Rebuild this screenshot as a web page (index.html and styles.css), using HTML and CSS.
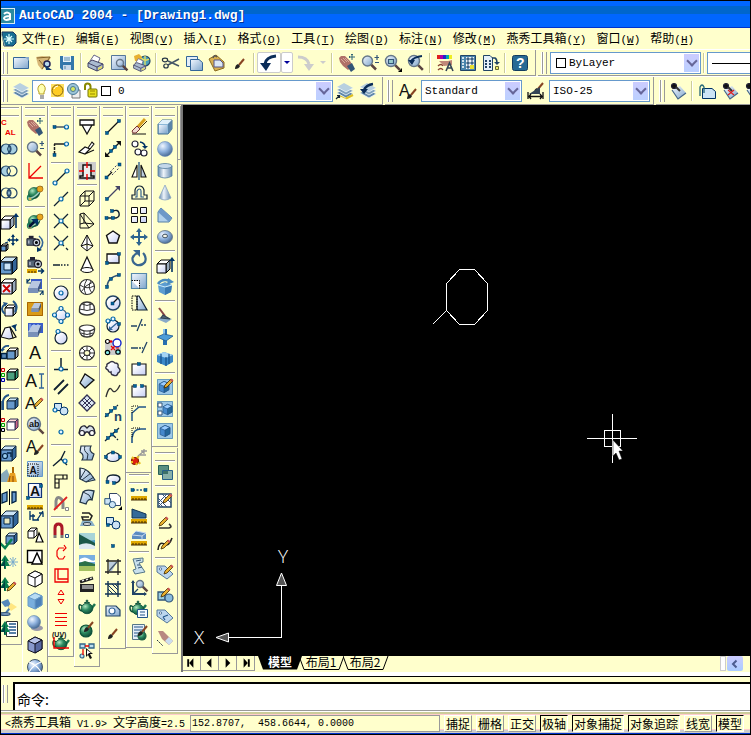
FILE: index.html
```html
<!DOCTYPE html>
<html lang="zh-CN">
<head>
<meta charset="utf-8">
<title>AutoCAD 2004 - [Drawing1.dwg]</title>
<link rel="stylesheet" href="styles.css">
</head>
<body>
<svg class="defs" aria-hidden="true">
  <defs>
    <linearGradient id="sky" x1="0" y1="0" x2="1" y2="1"><stop offset="0" stop-color="#f4f8ff"/><stop offset="1" stop-color="#7fa6cc"/></linearGradient>
    <linearGradient id="pale" x1="0" y1="0" x2="1" y2="1"><stop offset="0.2" stop-color="#ffffff"/><stop offset="1" stop-color="#c4cdf4"/></linearGradient>
    <linearGradient id="steel" x1="0" y1="0" x2="1" y2="0"><stop offset="0" stop-color="#5f86ac"/><stop offset="0.4" stop-color="#eef4fa"/><stop offset="1" stop-color="#5f86ac"/></linearGradient>
    <radialGradient id="ball" cx="0.35" cy="0.3" r="0.75"><stop offset="0" stop-color="#f0f6ff"/><stop offset="0.5" stop-color="#8fb2de"/><stop offset="1" stop-color="#446690"/></radialGradient>
    <radialGradient id="jade" cx="0.35" cy="0.3" r="0.8"><stop offset="0" stop-color="#b0e8c0"/><stop offset="0.45" stop-color="#2c8a60"/><stop offset="1" stop-color="#0a4030"/></radialGradient>
  </defs>
</svg>
<div class="window">
  <header class="titlebar">
    <svg class="app-icon" viewBox="0 0 14 16" aria-hidden="true"><rect width="14" height="16" fill="#d8ecf4"/><path d="M0 1H13V15H0Z" fill="#2c8aa0"/><path d="M3 6Q6 3 9 6V12M9 8Q3 8 3 10.500Q4 13 9 11" fill="none" stroke="#fff" stroke-width="2"/></svg>
    <h1>AutoCAD 2004 - [Drawing1.dwg]</h1>
  </header>
  <nav class="menubar">
    <svg class="doc-icon" viewBox="0 0 16 16" aria-hidden="true"><path d="M1 1H12L15 4V12L12 15H3Z" fill="#176f92" stroke="#1c3860"/><path d="M0 2L4 15" stroke="#8aa"/><path d="M8 3V13M3 8H13M5 5L11 11M11 5L5 11" stroke="#dff" stroke-width="1.200"/></svg>
    <a href="#">文件<span>(<u>F</u>)</span></a>
    <a href="#">编辑<span>(<u>E</u>)</span></a>
    <a href="#">视图<span>(<u>V</u>)</span></a>
    <a href="#">插入<span>(<u>I</u>)</span></a>
    <a href="#">格式<span>(<u>O</u>)</span></a>
    <a href="#">工具<span>(<u>T</u>)</span></a>
    <a href="#">绘图<span>(<u>D</u>)</span></a>
    <a href="#">标注<span>(<u>N</u>)</span></a>
    <a href="#">修改<span>(<u>M</u>)</span></a>
    <a href="#">燕秀工具箱<span>(<u>Y</u>)</span></a>
    <a href="#">窗口<span>(<u>W</u>)</span></a>
    <a href="#">帮助<span>(<u>H</u>)</span></a>
  </nav>
  <div class="toolrow">
    <div class="toolbar standard">
      <i class="grip"></i>
      <div class="tools" data-tools="new open save - print preview publish - cut copy paste brush -"></div>
      <div class="split"><button type="button" class="raised" data-icon="undo" aria-label="undo"></button><button type="button" class="raised drop" aria-label="undo list"></button></div>
      <div class="split off"><button type="button" data-icon="redo" aria-label="redo"></button><button type="button" class="drop" aria-label="redo list"></button></div>
      <div class="tools" data-tools="- pan zoom zoomwindow zoomprevious - properties designcenter palettes - help"></div>
    </div>
    <div class="toolbar open">
      <i class="grip"></i>
      <label class="combo color"><i class="swatch"></i><select aria-label="颜色"><option>ByLayer</option></select><i class="arrow"></i></label>
      <i class="sep"></i>
      <label class="combo linetype"><svg viewBox="0 0 80 10" aria-hidden="true"><path d="M0 5.500H80" stroke="#000"/></svg><select aria-label="线型"><option></option></select></label>
    </div>
  </div>
  <div class="toolrow second">
    <div class="toolbar">
      <i class="grip"></i>
      <div class="tools" data-tools="layers"></div>
      <label class="combo layer"><span class="layer-state"><svg viewBox="0 0 80 20" aria-hidden="true">
        <path d="M8 3A5 5 0 0 0 5 11V13H10V11A5 5 0 0 0 8 3Z" fill="#ffffb0" stroke="#b8a020"/><path d="M6 15H10M6 17H10" stroke="#555"/>
        <rect x="17" y="3" width="13" height="13" fill="#ffe060"/><circle cx="23.500" cy="9.500" r="5.500" fill="#ffcc22" stroke="#806010"/><path d="M20 8Q21 5 24 5" stroke="#fff" fill="none"/>
        <path d="M40 9H46V17H38V14" fill="#eee" stroke="#777"/><circle cx="39" cy="8" r="5.500" fill="#9cc4d8" stroke="#4a7a98"/><circle cx="39" cy="8" r="2.500" fill="#d8e860" stroke="#4a7a98"/>
        <path d="M51 9V5Q51 2.500 53.500 2.500T56.500 5V9" fill="none" stroke="#888800" stroke-width="2"/><rect x="54" y="8" width="9" height="8" rx="1" fill="#e8e020" stroke="#777700"/><path d="M56 10H61M56 13H61" stroke="#998800"/>
        <rect x="67.500" y="5.500" width="9" height="9" fill="#fff" stroke="#000"/></svg></span><select aria-label="图层"><option>0</option></select><i class="arrow"></i></label>
      <div class="tools" data-tools="layerset layerprev"></div>
    </div>
    <div class="toolbar styles">
      <i class="grip"></i>
      <div class="tools" data-tools="textbrush"></div>
      <label class="combo style"><select aria-label="文字样式"><option>Standard</option></select><i class="arrow"></i></label>
      <div class="tools" data-tools="dimstyle"></div>
      <label class="combo style"><select aria-label="标注样式"><option>ISO-25</option></select><i class="arrow"></i></label>
    </div>
    <div class="toolbar open">
      <i class="grip"></i>
      <div class="tools" data-tools="refedit - xref refadd refremove"></div>
    </div>
  </div>
  <main class="workspace">
    <div class="dock">
      <div class="col"><div class="palette" data-tools="cal union subtract intersect - extrude moveface offsetface deleteface rotateface taperface copyface colorface - copyedge coloredge - imprint clean separate shell check landscape landedit lamp landlist"></div></div>
      <div class="col"><div class="palette" data-tools="pan zoom redaxis planet - planetgo camera cameradist swap slabgold slabblue lettera - texta textpencil textfind textbrush textfit textbox rulers shapes1 shapes2 whitecube bluebox bluesphere slatecube spherewire"></div></div>
      <div class="col"><div class="palette" data-tools="track snapfrom - snapend snapmid snapint snapapp snapext - snapcenter snapquad snaptan - snapperp snapparallel snapinsert snapnode - snapnear snapcorner snapnone - magnet redloop redframe redarrows redlines uvteapot"></div></div>
      <div class="col"><div class="palette" data-tools="solid2d face3d edge=on - boxmesh wedgemesh pyramid conemesh spheremesh dome dish torusmesh - patch mesh - revsurf tabsurf rulesurf edgesurf scene fog background movie teapot teapotbrush pick"></div></div>
      <div class="col"><div class="palette" data-tools="line xline mline ray pline polygon rectangle arc circle circle3 cloud0 revcloud spline multiline0 breakline ellipse ellipsearc insertblock makeblock point region hatch boundary brush"></div></div>
      <div class="col">
        <div class="palette" data-tools="erase copyobj mirror offset array move rotate scale stretch trim extend break1 break2 chamfer fillet explode"></div>
        <div class="palette" data-tools="distance area massprop - list locate teapotlist listbrush"></div>
      </div>
      <div class="col">
        <div class="palette" data-tools="box sphere cylinder cone wedge torus - extrude revolve - slice section interfere - setupdraw setupview setupprofile"></div>
        <div class="palette spaced" data-tools="draworder - hatchedit pledit spedit - attedit blockedit tagedit mledit"></div>
      </div>
      <div class="col stub"></div>
    </div>
    <section class="document">
      <div class="canvas">
        <svg class="drawing" viewBox="183 106 567 549" fill="none" stroke="#fff" shape-rendering="crispEdges" role="img" aria-label="Drawing">
          <path d="M432.500 324.500L446.500 310.500L459.500 324.500H474.500L487.500 310.500V283.500L474.500 269.500H459.500L446.500 283.500V310.500"/>
          <path d="M587 438.500H637M612.500 414V463M604.500 430.500H620.500V446.500H604.500Z"/>
          <path d="M613 440V456L616 453L619 460L622 459L619 451H623Z" fill="#fff" stroke="#000" shape-rendering="auto" stroke-width="0.500"/>
        </svg>
        <svg class="ucs" viewBox="183 535 120 120" fill="none" stroke="#fff" aria-label="UCS">
          <path d="M229 636.500H281.500V585" shape-rendering="crispEdges"/>
          <path d="M281.500 572L276.500 584.500H286.500ZM216 636.500L228.500 632V641Z" fill="#555"/>
          <text x="194" y="643">X</text><text x="278" y="562">Y</text>
        </svg>
      </div>
      <div class="sheetbar">
        <button type="button" aria-label="第一个"><svg viewBox="0 0 18 14"><path d="M5.500 3V11" stroke="#000" stroke-width="2"/><path d="M11 2V12L6.500 7Z"/></svg></button>
        <button type="button" aria-label="上一个"><svg viewBox="0 0 18 14"><path d="M11 2V12L6 7Z"/></svg></button>
        <button type="button" aria-label="下一个"><svg viewBox="0 0 18 14"><path d="M7 2V12L12 7Z"/></svg></button>
        <button type="button" aria-label="最后一个"><svg viewBox="0 0 18 14"><path d="M12.500 3V11" stroke="#000" stroke-width="2"/><path d="M7 2V12L11.500 7Z"/></svg></button>
        <div class="tabs">
          <button type="button" class="tab active"><svg viewBox="0 0 46 14" aria-hidden="true"><path d="M0 0L5 13.500H39L44 0Z" fill="#000"/></svg><span>模型</span></button>
          <button type="button" class="tab"><svg viewBox="0 0 46 14" aria-hidden="true"><path d="M0 0L5 13.500H40L45 0" fill="#ffffcc" stroke="#000"/></svg><span>布局1</span></button>
          <button type="button" class="tab"><svg viewBox="0 0 46 14" aria-hidden="true"><path d="M0 0L5 13.500H40L45 0" fill="#ffffcc" stroke="#000"/></svg><span>布局2</span></button>
        </div>
        <i class="splitter"></i>
        <button type="button" class="scroll" aria-label="向左滚动"><svg viewBox="0 0 16 14"><path d="M9.500 3.500L6 7L9.500 10.500" fill="none" stroke="#4c5c90" stroke-width="2"/></svg></button>
      </div>
    </section>
  </main>
  <section class="command">
    <i class="grip"></i>
    <div class="prompt"><label for="cmd">命令:</label><input id="cmd" type="text"></div>
  </section>
  <footer class="status">
    <p><span>&lt;</span>燕秀工具箱<span> V1.9&gt; </span>文字高度<span>=2.5</span></p>
    <output>152.8707,&nbsp; 458.6644, 0.0000</output>
    <button type="button">捕捉</button>
    <button type="button">栅格</button>
    <button type="button">正交</button>
    <button type="button" class="down">极轴</button>
    <button type="button" class="down">对象捕捉</button>
    <button type="button" class="down">对象追踪</button>
    <button type="button">线宽</button>
    <button type="button" class="down">模型</button>
  </footer>
</div>
<script src="icons.js"></script>
</body>
</html>
```

FILE: styles.css
```css
* { box-sizing: border-box; }
:root {
  --face: #ffffcc;
  --edge: #999999;
  --cjk: "Noto Sans CJK SC", sans-serif;
  --mono: "Liberation Mono", monospace;
}
html, body { height: 100%; margin: 0; }
body { background: #000; font: 12px/16px var(--cjk); color: #000; overflow: hidden; }
button, select, input { font: inherit; color: inherit; margin: 0; padding: 0; border: 0; background: none; border-radius: 0; }
a { color: inherit; text-decoration: none; }
svg { display: block; flex: none; }
.defs { position: absolute; width: 0; height: 0; }

.window { height: 100vh; display: flex; flex-direction: column; background: var(--face); border: 1px solid #000; overflow: hidden; }

.titlebar { height: 27px; flex: none; display: flex; align-items: center; gap: 4px; padding-top: 3px; background: linear-gradient(#0066ff 5px, #0066cc 5px, #0066cc 13px, #0066ff 13px, #0066ff 26px, #0033cc 26px); }
.app-icon { width: 14px; height: 16px; }
.titlebar h1 { margin: 0; font: bold 13px/20px var(--mono); color: #fff; text-shadow: 1px 1px #003399; white-space: pre; }

.menubar { height: 21px; flex: none; display: flex; align-items: center; gap: 10px; white-space: nowrap; }
.doc-icon { width: 16px; height: 16px; margin-right: -5px; }
.menubar span { font: 11px/16px var(--mono); }

.toolrow { height: 27px; flex: none; display: flex; border-top: 1px solid #fff; overflow: hidden; }
.toolrow.second { height: 29px; }
.toolbar { display: flex; align-items: center; flex: none; padding: 0 3px 0 2px; border-right: 1px solid var(--edge); border-bottom: 1px solid var(--edge); margin-right: 2px; }
.toolbar.standard { padding-right: 4px; }
.toolbar.styles { gap: 2px; padding: 0 3px; }
.toolbar.open { flex: 1 0 auto; border-right: 0; margin-right: 0; padding-left: 4px; }
.grip { flex: none; width: 5px; height: 22px; border: solid var(--edge); border-width: 0 1px; box-shadow: inset 1px 0 #fff, -1px 0 #fff; }
.toolbar .grip { margin-right: 1px; }
.tools { display: flex; align-items: center; }
.tools button { width: 23px; height: 22px; display: flex; align-items: center; justify-content: center; }
.tools svg, .palette svg, .split svg { width: 20px; height: 20px; }
.sep { flex: none; width: 2px; margin: 0 2px; height: 20px; background: linear-gradient(90deg, #cccc99 1px, #fff 1px); }
.split { display: flex; height: 21px; }
.split button { width: 24px; display: flex; align-items: center; justify-content: center; }
.split .drop { width: 12px; }
.split .drop::before { content: ""; border: 3px solid transparent; border-top-color: #000099; border-bottom: 0; }
.split.off .drop::before { border-top-color: #cccccc; }
.split .raised { background: #fff; border: 1px solid #cccccc; border-radius: 2px; }

.combo { display: flex; align-items: center; flex: none; height: 22px; background: #fff; border: 1px solid #6699cc; overflow: hidden; }
.combo select { appearance: none; flex: 1; min-width: 0; font: 11px/16px var(--mono); }
.combo.color { width: 151px; margin-left: 2px; }
.combo.color .swatch { width: 10px; height: 10px; border: 1px solid #000; margin: 0 3px 0 5px; }
.combo.linetype { flex: 1; border-right: 0; padding-left: 4px; }
.combo.linetype svg { width: 80px; height: 10px; }
.combo.linetype select { flex: 0 0 0; width: 0; }
.combo.layer { width: 301px; }
.layer-state svg { width: 80px; height: 20px; }
.layer-state { margin: 0 4px 0 1px; }
.combo.style { width: 101px; padding-left: 3px; }
.arrow { flex: none; width: 15px; height: 18px; margin-right: 1px; background: linear-gradient(#ccccff, #bbd0ff); display: flex; align-items: center; justify-content: center; }
.arrow::before { content: ""; width: 6px; height: 6px; margin-bottom: 3px; border: solid #666699; border-width: 0 2px 2px 0; transform: rotate(45deg); }

.workspace { flex: 1; min-height: 0; display: flex; }
.dock { flex: none; display: flex; align-items: flex-start; margin-left: -5px; overflow: hidden; height: 100%; padding-top: 1px; }
.col { width: 26px; flex: none; }
.palette { border: solid var(--edge); border-width: 0 1px 1px 0; padding: 10px 0 4px; box-shadow: inset 1px 0 #fff; display: flex; flex-direction: column; align-items: center; position: relative; }
.palette::before { content: ""; position: absolute; left: 3px; right: 2px; top: 1px; height: 7px; border: solid var(--edge); border-width: 1px 0; box-shadow: 0 1px #fff, inset 0 1px #fff; }
.palette.spaced { margin-top: 1px; padding-top: 13px; }
.palette.spaced::before { top: 4px; }
.palette button { width: 22px; height: 22px; display: flex; align-items: center; justify-content: center; }
.palette button.on { background: #cccccc; background-clip: content-box; padding: 2px; }
.palette .sep { width: 20px; height: 2px; margin: 2px 0; background: linear-gradient(var(--edge) 1px, #fff 1px); }
.col.stub { width: 3px; height: 54px; border: solid var(--edge); border-width: 0 1px 1px 0; }

.document { flex: 1; min-width: 0; display: flex; flex-direction: column; border-left: 2px solid #777; }
.canvas { flex: 1; min-height: 0; position: relative; background: #000; overflow: hidden; border-top: 1px solid #000; }
.drawing { position: absolute; left: 0; top: 0; width: 567px; height: 549px; }
.ucs { position: absolute; left: 0; bottom: 0; width: 120px; height: 120px; }
.ucs text { font: 300 19px "Open Sans", sans-serif; fill: #fff; stroke: none; }
.sheetbar { height: 15px; flex: none; display: flex; margin-bottom: 1px; }
.sheetbar > button { width: 18px; border: solid var(--edge); border-width: 0 1px 1px 0; overflow: hidden; }
.sheetbar svg { width: 100%; height: 14px; }
.tabs { display: flex; margin-left: 3px; }
.tab { position: relative; width: 46px; height: 14px; margin-right: -2px; text-align: center; line-height: 12px; }
.tab svg { position: absolute; inset: 0; }
.tab span { position: relative; display: block; height: 14px; padding-right: 2px; white-space: nowrap; }
.tab.active { z-index: 1; color: #fff; font-weight: bold; margin-right: -5px; }
.splitter { width: 6px; margin-left: auto; border: 1px solid #cccccc; background: #fff; }
.sheetbar > .scroll { width: 16px; margin: 0 7px 0 1px; border: 0; border-radius: 2px; background: linear-gradient(#ccccff, #aaccff); }

.command { flex: none; height: 38px; display: flex; border-top: 4px solid #fff; padding-left: 2px; gap: 5px; background: linear-gradient(#000 1px, transparent 1px); }
.command .grip { height: 18px; margin-top: 9px; }
.prompt { flex: 1; display: flex; align-items: flex-end; gap: 4px; margin-top: 6px; padding: 0 2px 2px; background: #fff; border: solid #000; border-width: 2px 0 0 2px; font-size: 14px; line-height: 18px; }
.prompt input { flex: 1; min-width: 0; outline: 0; }

.status { flex: none; height: 24px; display: flex; align-items: center; gap: 4px; padding: 2px 6px 0 4px; white-space: nowrap; overflow: hidden; background: linear-gradient(#999 1px, #fff 1px, #fff 2px, #cccc99 2px, #cccc99 4px, #ffcccc 4px, #ffcccc 5px, var(--face) 5px, var(--face) 19px, #ffcccc 19px, #ffcccc 20px, #cccccc 20px, #cccccc 23px, #0033cc 23px); }
.status p { margin: 0; flex: none; width: 181px; }
.status span, .status output { font: 10px/14px var(--mono); white-space: pre; }
.status output { flex: 1; min-width: 0; height: 17px; padding: 1px; border: 1px solid var(--edge); background: var(--face); }
.status button { flex: none; height: 17px; line-height: 15px; padding: 0 1px; background: var(--face); border: 1px solid; border-color: #fff var(--edge) var(--edge) #fff; }
.status button.down { border-color: #000 #fff #fff #000; }
```

FILE: icons.js
```javascript
// Shape helpers; every icon is drawn on a 20 x 20 grid.
const p = (d, s = '#000', f = 'none', w = 1.3) => `<path d="${d}" stroke="${s}" fill="${f}" stroke-width="${w}"/>`;
const f = (d, c) => `<path d="${d}" fill="${c}"/>`;
const c = (x, y, r, fill = 'none', s = '#000', w = 1.2) => `<circle cx="${x}" cy="${y}" r="${r}" fill="${fill}" stroke="${s}" stroke-width="${w}"/>`;
const e = (x, y, rx, ry, fill = 'none', s = '#000', w = 1.2) => `<ellipse cx="${x}" cy="${y}" rx="${rx}" ry="${ry}" fill="${fill}" stroke="${s}" stroke-width="${w}"/>`;
const t = (x, y, s, size, col = '#111', w = 400) => `<text x="${x}" y="${y}" font-family="Liberation Sans" font-size="${size}" font-weight="${w}" fill="${col}">${s}</text>`;
const sq = (...a) => { let s = ''; for (let i = 0; i < a.length; i += 2) s += `<rect x="${a[i] - 1.5}" y="${a[i + 1] - 1.5}" width="3" height="3" fill="#006699" stroke="#003366" stroke-width="0.5"/>`; return s; };
const ring = (...a) => { let s = ''; for (let i = 0; i < a.length; i += 2) s += c(a[i], a[i + 1], 2, '#e8f6ff', '#0066aa', 1.2); return s; };
const cube = (x, y, n, front = 'url(#pale)', top = '#fff', side = '#9ab', s = '#000') => {
  const d = Math.round(n * 0.4);
  return p(`M${x} ${y + d}l${d} ${-d}h${n}l${-d} ${d}Z`, s, top, 1) + p(`M${x + n} ${y + d}l${d} ${-d}v${n}l${-d} ${d}Z`, s, side, 1) + p(`M${x} ${y + d}h${n}v${n}h${-n}Z`, s, front, 1);
};
const blueCube = (x, y, n) => cube(x, y, n, '#6699cc', '#cce4f6', '#33669a', '#102840');
const iso = (a, b, d, s) => p('M10 2L17 5V14L10 18L3 15V6Z', s, b, 1) + p('M3 6L10 2L17 5L10 9Z', s, a, 1) + p('M10 9L17 5V14L10 18Z', s, d, 1);
const pencil = (x, y) => f(`M${x} ${y}l1-3 6-6 2 2-6 6Z`, '#e8b030') + p(`M${x} ${y}l1-3 6-6 2 2-6 6Z`, '#402800', 'none', 0.8) + f(`M${x + 6} ${y - 8}l1.500-1.500 2 2-1.500 1.500Z`, '#cc5555');
const brush = (x, y) => p(`M${x + 4} ${y - 4}L${x + 9} ${y - 10}`, '#884422', 'none', 2) + f(`M${x} ${y}Q${x} ${y - 4} ${x + 3} ${y - 5}L${x + 5} ${y - 3}Q${x + 4} ${y} ${x} ${y}Z`, '#222');
const lens = (x, y, r) => p(`M${x + r * 0.7} ${y + r * 0.7}L${x + r * 0.7 + 5} ${y + r * 0.7 + 5}`, '#5a4440', 'none', 2.5) + c(x, y, r, 'url(#sky)', '#667788', 1.4);
const ruler = y => f(`M2 ${y}H18V${y + 4}H2Z`, '#e0a800') + p(`M4 ${y + 4}V${y + 2}M7 ${y + 4}V${y + 2}M10 ${y + 4}V${y + 2}M13 ${y + 4}V${y + 2}M16 ${y + 4}V${y + 2}M2 ${y + 4}H18`, '#402800', 'none', 1);
const tree = f('M6 2L10 8H8L11 13H7V16H5V13H1L4 8H2Z', '#0a8050') + f('M6 4V15H5V13H2L5 8Z', '#044');
const teapot = (dy = 0) => `<g transform="translate(0 ${dy})">` + p('M5 9Q2 6 2 10T6 14', '#0a5038', 'none', 1.5) + p('M14 12L18 7', '#1c7450', 'none', 2.5) + e(10, 11.5, 5.8, 5.2, 'url(#jade)', '#0a5038', 0.8) + p('M7 6Q10 4 13 6', '#0a5038', '#60b080', 1) + c(10, 4, 1, '#287050', '#0a5038', 0.8) + '</g>';
const tag = f('M2 4L10 4L18 12L12 17L2 10Z', '#bcd6ee') + p('M2 4L10 4L18 12L12 17L2 10Z', '#557799', 'none', 1) + c(5.5, 7, 1.2, '#fff', '#557799', 1);
const globe = f('M2 13Q8 4 16 3Q19 3 17 7Q12 16 5 18Q1 18 2 13Z', '#208060') + c(9, 10, 5.5, 'url(#jade)', '#0a5038', 0.7) + p('M3 15Q9 16 15 8', '#a0d0c0', 'none', 1.3) + c(15, 6, 3, '#e8a820', '#a06010', 0.7) + c(5, 16, 1.5, '#d8d040', '#888', 0.5);
const hand = f('M2 5L4 3L8 3L13 8L16 13L11 17L6 13L3 9Z', '#b07068') + p('M4 6L8 10M6 5L10 9M8 5L12 9', '#d8a898', 'none', 1) + f('M10 13L15 10L18 16L14 19Z', '#335577') + p('M15 1V7M12 4H18M14 2L15 1L16 2M13 3L12 4L13 5', '#336677', 'none', 1);
const sheets = f('M2 12L9 9L18 13L11 17Z', '#5f86a8') + f('M2 9L9 6L18 10L11 14Z', '#7fa0bc') + f('M2 6L9 2L18 7L11 11Z', '#b8d0e0') + p('M2 6L11 11L18 7M2 9L11 14L18 10M2 12L11 17L18 13', '#eef6fc', 'none', 0.8);
const page = p('M2.500 4.500H17.500V15.500H2.500Z', '#336699', 'url(#sky)', 1) + f('M14 4H18V8Z', '#88aacc');
const printer = f('M4 8L8 2L14 5L12 10Z', '#fff') + p('M4 8L8 2L14 5L12 10', '#668', 'none', 1) + p('M2 10L6 7L17 11V15L11 18L2 14Z', '#446', '#aabbd0', 1) + p('M2 10L11 14L17 11M11 14V18', '#446', 'none', 1) + f('M12 15L16 13V15L12 17Z', '#e8e060');
const cam = p('M2 7H11V14H2Z', '#223', '#556677', 1) + c(12, 11, 3.5, '#c8d4e0', '#223', 1.3) + c(12, 11, 1, '#223') + f('M4 4H9V7H4Z', '#223') + p('M4 9V12', '#ccd', 'none', 1.2);
const slab = f('M3 11L7 4H16L13 11Z', '#b8c8e0') + f('M3 11H13V16H3Z', '#7890b8') + f('M13 11L16 4V9L13 16Z', '#405880');
const refpin = f('M4 9L12 5L18 12L10 18Z', 'url(#sky)') + p('M4 9L10 18L18 12', '#446688', 'none', 1.2) + c(6, 5, 2.5, '#223', '#223') + c(6, 5, 1, '#cc8') + p('M8 6L12 10', '#333', 'none', 2);
const blocks = p('M3.500 4.500H10.500V11.500H3.500Z', '#036', '#cce4f6', 1) + c(13, 12, 4, '#cce4f6', '#036', 1);
const board = f('M2 2H18V18H2Z', '#9cc8e8') + p('M2.500 2.500H17.500V17.500H2.500Z', '#6699bb', 'none', 1);

const icons = {
  // Standard, layer, style and reference bars
  new: page,
  open: f('M2 4L8 3L17 4L15 8L8 17L4 12Z', '#d8b878') + p('M3 5L16 4L8 16M5 7L10 13', '#80602a', 'none', 1) + c(13, 11, 3, '#b8d8ec', '#225', 1.5) + f('M11 12L18 17H12Z', '#113c70'),
  save: f('M3 3H17V17H5L3 15Z', '#3377aa') + f('M6 3H14V9H6Z', '#e8f2fa') + f('M6 12H14V17H6Z', '#c8d8e8') + p('M7 5H13M7 7H13M8 13V16', '#5588aa', 'none', 1),
  print: printer,
  preview: p('M2.500 2.500H16.500V16.500H2.500Z', '#557799', 'url(#sky)', 1) + `<g transform="translate(4 3)">${lens(7, 7, 3.5)}</g>`,
  publish: c(13, 8, 5, '#4ca0b8', '#246') + p('M9 5Q13 9 17 6M13 3V13', '#e8e060') + f('M2 3L7 1L10 4L8 8L3 8Z', '#e8b030') + `<g transform="translate(0 4) scale(.8)">${printer}</g>`,
  cut: p('M18 6L7 12M18 13L7 8', '#456', 'none', 1.5) + e(4, 7, 2.6, 1.8, 'none', '#234') + e(5, 13, 2.2, 2, 'none', '#234'),
  copy: p('M2.500 3.500H13.500V13.500H2.500Z', '#369', '#e4eef8', 1) + p('M6.500 6.500H15L18.500 9.500V17.500H6.500Z', '#369', 'url(#sky)', 1),
  paste: p('M2 6L9 2L17 9V15L8 18Z', '#8a6a20', '#d8b050', 1) + p('M7 7H13L16 10V14H7Z', '#558', '#dce8f4', 1) + p('M6 5Q7 1 10 4', '#555', 'none', 1.5),
  brush: brush(5, 16),
  undo: p('M6 11Q7 4 17 3', '#0a2c58', 'none', 3) + f('M1 10H12L7 18Z', '#0a2c58'),
  redo: p('M3 4Q12 4 14 11', '#cccccc', 'none', 3) + f('M9 11H19L14 18Z', '#cccccc'),
  pan: hand,
  zoom: lens(7.5, 8, 5) + p('M17 2V7M14.500 4.500H19M15 9.500H19', '#357', 'none', 1.2),
  zoomwindow: lens(8, 8, 5.5) + p('M5.500 6.500H10.500V10.500H5.500Z', '#357', '#9cc', 1.2) + f('M19 15V19H15Z', '#000'),
  zoomprevious: lens(8, 8, 5.5) + p('M5 8Q8 4 16 3', '#0a2c58', 'none', 2) + f('M2 7H9L6 12Z', '#0a2c58'),
  properties: f('M2 2H5V6H2Z', '#e02020') + f('M5 2H8V6H5Z', '#a0a') + f('M8 2H11V6H8Z', '#22c') + f('M11 2H14V6H11Z', '#0aa') + f('M14 2H17V6H14Z', '#ee2') + f('M4 8H13L17 7V12L9 13Z', '#c08878') + p('M3 13Q6 10 8 13M3 17Q6 14 8 17', '#843') + p('M11 18L14.500 10L18 18M12 15H17', '#345', 'none', 1.6),
  designcenter: p('M2.500 2.500H17.500V17.500H2.500Z', '#246', '#4884ac', 1) + f('M8 4H16V16H8Z', '#eef4fc') + p('M9 5H11V7H9ZM13 5H15V7H13ZM9 9H11V11H9ZM13 9H15V11H13ZM9 13H11V15H9Z', '#246', '#8bd', 1) + p('M4 5H6M4 8H6M4 11H6M4 14H6', '#fff') + f('M12 12H16V16H12Z', '#e8e030'),
  palettes: p('M2.500 2.500H9L11.500 5V17.500H2.500Z', '#246', '#e4f0fa', 1) + p('M4 8H6M8 8H10M4 11H6M8 11H10M4 14H6M8 14H10', '#246', 'none', 2) + p('M11 5H14Q16 6 16 10', '#246', 'none', 1.5) + f('M13 9H19L16 12Z', '#246') + p('M14.500 13.500H17.500V16.500H14.500Z', '#663', '#ee6', 1),
  help: `<rect x="2.500" y="2.500" width="15" height="15" rx="2" fill="#266a94" stroke="#123c60"/>` + t(6, 15, '?', 14, '#fff', 700),
  layers: sheets,
  layerset: f('M4 15L11 12L18 14L11 18Z', '#e0c020') + sheets + p('M11 17.500L18 14', '#e0c020', 'none', 2) + p('M1 18L4 15M2 14.500H4.500V17', '#123', 'none', 1.2),
  layerprev: sheets + p('M6 9Q8 4 15 3', '#0a2c58', 'none', 2.5) + f('M2 8H10L6 13Z', '#0a2c58'),
  textbrush: t(1, 15, 'A', 16, '#111') + brush(9, 18),
  dimstyle: brush(8, 12) + f('M3 13L14 6V13Z', '#345') + p('M2 11V18M17 11V18M3 15.500H16M5 13L3 15.500L5 18M14 13L16 15.500L14 18', '#111', 'none', 1.3),
  refedit: refpin,
  xref: p('M5.500 7.500H15L18.500 10.500V17.500H5.500Z', '#036', '#cce4f6', 1) + p('M3 15V6Q5 2 7 6V12', '#267', 'none', 1.3),
  refadd: refpin + p('M8 9L14 14M14 9L8 14', '#d22'),
  refremove: refpin + f('M10 10L14 8L16 12L12 14Z', '#e8d030'),

  // Solids editing, rendering
  cal: t(2, 8, 'C', 8, '#ee0000', 700) + t(6, 18, 'AL', 8, '#ee0000', 700),
  union: c(13, 10, 5, '#a8d0e0', '#246') + c(7, 10, 5, '#a8d0e0', '#246') + p('M10 6Q7 10 10 14Q13 10 10 6', '#246', '#7ab', 1),
  subtract: c(7, 10, 5, '#a8d0e0', '#246') + c(13, 10, 5, '#ffffcc', '#246') + p('M10 6Q13 10 10 14', '#246', 'none', 1),
  intersect: c(7, 10, 5, 'none', '#246') + c(13, 10, 5, 'none', '#246') + p('M10 6Q7 10 10 14Q13 10 10 6', '#246', '#9cc4dc', 1),
  extrude: cube(2, 5, 9) + p('M17 4V17', '#036', 'none', 1.6) + f('M14 6H20L17 2Z', '#036'),
  moveface: cube(2, 11, 5, '#69c') + p('M14 2V12M9 7H19', '#036', 'none', 1.5) + f('M12 4H16L14 1ZM12 10H16L14 13ZM11 5V9L8 7ZM17 5V9L20 7Z', '#036') + p('M6 10L9 9', '#036'),
  offsetface: cube(1, 2, 12, '#69c', '#cce4f6', '#369') + p('M5 8H12V15H5Z', '#024', '#cce4f6', 1),
  deleteface: cube(2, 2, 11) + p('M4 8L11 15M11 8L4 15', '#cc0000', 'none', 1.8),
  rotateface: cube(6, 6, 8) + p('M6 15Q0 10 6 5M14 2Q20 7 16 13', '#258', 'none', 2) + f('M4 3L9 4L6 8Z', '#258'),
  taperface: p('M2 16L6 7L11 6L14 17L10 18Z', '#111', 'url(#pale)', 1.2) + p('M11 6L17 16L14 17', '#111') + p('M17 10L15 4', '#036') + f('M12 5L18 3L16 8Z', '#036'),
  copyface: cube(8, 5, 8, '#69c') + p('M2.500 10.500H7.500V15.500H2.500Z', '#024', '#5a8ab8') + p('M3 7Q5 2 10 3', '#258', 'none', 1.8) + f('M1 6H6L3 9Z', '#258'),
  colorface: cube(8, 4, 8, '#4ca080', '#fff', '#397') + p('M2.500 3.500H5.500V6.500H2.500Z', '#c00', '#fdd', 1) + p('M2.500 8.500H5.500V11.500H2.500Z', '#090', '#dfd', 1) + p('M2.500 13.500H5.500V16.500H2.500Z', '#00a', '#ddf', 1),
  copyedge: blueCube(8, 5, 8) + p('M4 17V8Q5 3 10 2', '#258', 'none', 2) + p('M2 8V17', '#036'),
  coloredge: cube(8, 4, 8, '#fff', '#fdd', '#c68', '#335') + p('M2.500 3.500H5.500V6.500H2.500Z', '#c00', '#fdd', 1) + p('M2.500 8.500H5.500V11.500H2.500Z', '#090', '#dfd', 1) + p('M2.500 13.500H5.500V16.500H2.500Z', '#000', '#ddf', 1),
  imprint: blueCube(2, 3, 11) + c(6, 13, 2.5, '#9ce', '#024') + p('M8 10H12V14', '#024'),
  clean: f('M2 9L8 4L13 17H2Z', '#8ab') + p('M14 2V8', '#a60', 'none', 2) + f('M11 8H16L18 17H8Z', '#e8a020') + p('M11 11L10 17M14 11V17', '#840', 'none', 1),
  separate: p('M3 7L8 5V14L3 16ZM13 5H17V14L13 16Z', '#024', '#69c') + p('M10.500 2V18', '#000', 'none', 1),
  shell: blueCube(2, 2, 12) + p('M5 9H11V15H5Z', '#024', '#e8e8c0', 1),
  check: blueCube(7, 2, 8) + p('M1 12L6 17L13 8', '#0a8050', 'none', 2.5),
  landscape: tree + p('M14 4V14M9 9H19M11 5L17 13M17 5L11 13', '#7ac', 'none', 1),
  landedit: tree + pencil(8, 16),
  lamp: p('M6 17L11 11L8 7', '#4477aa', 'none', 2) + f('M2 5L9 2L12 8L6 10Z', '#5588bb') + f('M12 6L18 10L12 14L9 10Z', '#ffe680') + e(6, 17, 5, 1.5, '#79b', '#357'),
  landlist: p('M7.500 2.500H18.500V17.500H7.500Z', '#333', '#fff', 1) + p('M10 5H17M10 8H17M10 11H17M10 14H17', '#258', 'none', 1.5) + tree,

  // View, text, 3D objects
  redaxis: p('M4 2V17H18M4 17L16 5', '#ee0000', 'none', 1.3),
  planet: globe,
  planetgo: globe + p('M4 16L11 9', '#013', 'none', 2.5) + f('M6 8H13V15Z', '#036'),
  camera: `<g transform="translate(0 -1) scale(.95)">${cam}</g>` + p('M14 3Q21 9 15 16', '#369', 'none', 1.5) + f('M12 14L12 19L17 17Z', '#036'),
  cameradist: `<g transform="translate(1 -2)">${cam}</g>` + f('M2 14H12V18H2Z', '#e0a800') + p('M4 18V16M7 18V16M10 18V16', '#420', 'none', 1) + p('M13 16H18M16 13.500L18.500 16L16 18.500', '#036', 'none', 1.5),
  swap: f('M6 2H17V12H6Z', '#3a5cc8') + slab + p('M2 5L5 2M15 18L18 14M2 2V6H6M18 18V14H14', '#036', 'none', 1.2),
  slabgold: f('M2 3H18V17H2Z', '#d89a18') + `<g transform="translate(4 1) scale(.75)">${slab}</g>` + p('M2.500 3.500H17.500V16.500H2.500Z', '#a60', 'none', 1),
  slabblue: f('M3 2H18V12H3Z', '#3a5cc8') + slab + p('M5 3V8M9 3V6M13 3V5', '#acf', 'none', 1),
  lettera: t(4, 16, 'A', 18),
  texta: t(0, 16, 'A', 18) + p('M16.500 3V17M14 3H19M14 17H19', '#369', 'none', 1.3),
  textpencil: t(0, 16, 'A', 17) + pencil(9, 14),
  textfind: lens(9, 9, 6.5) + t(4, 12, 'ab', 9, '#111', 700),
  textfit: p('M2.500 2.500H17.500V17.500H2.500Z', '#69c', 'url(#sky)', 1) + `<path d="M3 5H13V17H3Z" fill="none" stroke="#000" stroke-dasharray="1 1"/>` + t(4.500, 15, 'A', 10, '#111', 700),
  textbox: p('M3.500 2.500H16.500V16.500H3.500Z', '#137', 'url(#pale)', 1.2) + t(5, 15, 'A', 14, '#111', 700) + sq(16, 5, 3, 17),
  rulers: ruler(2) + p('M5 8V17M5 13H10M8 11V17H14M12 17L18 8M14 10H18V14', '#036', 'none', 1.3),
  shapes1: p('M3 6L6 3H12V10L9 13H3ZM3 6H9V13M9 6L12 3', '#000', '#fff', 1) + p('M11 17L14 8L18 17Z', '#000', '#fff', 1.2),
  shapes2: p('M2.500 3.500H17V15.500H2.500Z', '#000', '#fff', 1.4) + p('M7 17L12 6L17 17Z', '#000', '#fff', 1.4),
  whitecube: iso('#fff', '#fff', '#fff', '#111'),
  bluebox: iso('#b8dcf4', '#79aede', '#4c80b8', '#6a9cc8'),
  bluesphere: e(12, 15, 6, 3, '#99a', 'none') + c(9, 9, 6.5, 'url(#ball)', '#4472a0', 0.5),
  slatecube: iso('#b8c4e8', '#8898cc', '#5868a0', '#112'),
  spherewire: c(10, 10, 7.5, 'url(#ball)', '#456', 1) + p('M4 5Q12 8 16 15M16 5Q8 8 4 15', '#fff', 'none', 1.2),

  // Object snaps
  track: p('M4 10H14', '#456', 'none', 1.5) + sq(3.500, 10) + ring(15.500, 10),
  snapfrom: `<path d="M3.500 15V5" stroke="#222" stroke-width="1.500" stroke-dasharray="3 1"/>` + p('M3 5H14', '#222', 'none', 1.5) + sq(3.500, 16) + ring(15.500, 5),
  snapend: p('M4 16L15 5', '#123') + ring(4, 16, 16, 4),
  snapmid: p('M3 17L17 3', '#123') + ring(10, 10),
  snapint: p('M3 3L17 17M17 3L3 17', '#123') + ring(10, 10),
  snapapp: p('M3 17L17 3M3 3L8 8M11 11L13 13M15 15L17 17', '#123') + ring(10, 10),
  snapext: `<path d="M2 10H9" stroke="#123" stroke-width="1.500"/><path d="M10 10H18" stroke="#123" stroke-width="1.500" stroke-dasharray="1.500 1.500"/>`,
  snapcenter: c(10, 10, 7, 'url(#pale)', '#123') + ring(10, 10),
  snapquad: c(10, 10, 5.5, 'url(#pale)', '#357') + ring(10, 3.500, 10, 16.500, 3.500, 10, 16.500, 10),
  snaptan: c(10, 11, 6, 'url(#pale)', '#123') + ring(7, 4.500),
  snapperp: p('M10 3V13M3 14.500H17', '#123', 'none', 1.5) + ring(10, 14),
  snapparallel: p('M3 13L13 3M7 17L17 7', '#123', 'none', 1.8),
  snapinsert: blocks + ring(4, 11),
  snapnode: ring(10, 11),
  snapnear: p('M2 17L10 10L14 2M10 10L16 16', '#123', 'none', 1.4) + ring(14, 12),
  snapcorner: p('M4 4H16V8H8V17H4ZM4 8H8M12 4V8M4 12H8', '#111', 'none', 1.2),
  snapnone: p('M5 16V8Q6 3 9 5T12 10V16', '#888', 'none', 3) + p('M3 17L16 4', '#e02020', 'none', 1.8) + p('M14.500 14.500H17.500V17.500H14.500Z', '#888', '#fff', 1),
  magnet: p('M4 14V7Q4 3 7.500 3T11 7V14', '#aa1828', 'none', 3) + p('M2.500 15.500H5.500M9.500 15.500H12.500', '#777', 'none', 3) + p('M14.500 13.500H17.500V16.500H14.500Z', '#258', '#fff', 1),
  redloop: p('M13 5H8L6 8V13L8 16H12L14 13M13 2L15 5L12 8', '#ee0000', 'none', 1.2),
  redframe: p('M4 4H17V17H4ZM7 4V14H17', '#ee0000', 'none', 1.3),
  redarrows: p('M10 3L7 7.500H13ZM10 17L7 12.500H13Z', '#ee0000', 'none', 1),
  redlines: p('M4 4.500H16M4 8.500H16M4 12.500H16M4 16.500H16', '#ee0000', 'none', 1),
  uvteapot: teapot(2) + t(1, 6, '(UV)', 7, '#111', 700) + p('M3 6V17H18', '#ee0000', 'none', 1.4),

  // Surfaces and rendering
  solid2d: p('M3 3H17V8H3ZM5 8H15L10 17Z', '#111', '#fff', 1.3),
  face3d: p('M2 13L8 8L13 10L8 15ZM8 15L17 11M11 9L15 3L17 5L13 10', '#111', '#fff', 1.1),
  edge: p('M6 4H14V15H17V17H3V15H6Z', '#111', '#eee', 1.5) + p('M10 1V7M10 13V19M2 10H7M13 10H18', '#ee0000', 'none', 1.4),
  boxmesh: p('M3 7L8 2H17V12L12 17H3ZM3 7H12V17M12 7L17 2M8 2V12H17M8 12L3 17', '#111', 'none', 1),
  wedgemesh: p('M3 3V17H12L17 13L7 2ZM3 3L12 17M3 13L7 12V2M7 12L17 13', '#111', 'none', 1),
  pyramid: p('M10 2L4 13L10 18L16 13ZM10 2V18M4 13L10 11L16 13', '#111', '#fff', 1),
  conemesh: p('M10 2L4 15Q10 19 16 15Z', '#111', '#fff', 1.2) + e(10, 15, 6, 2.5, '#fff', '#111', 1),
  spheremesh: c(10, 10, 7.5, '#fff', '#333') + p('M10 2.500Q5 10 9 17.500M3 8Q10 13 17 9M14 4Q10 10 15 16M4 15Q8 8 16 5', '#333', 'none', 1),
  dome: p('M2.500 10Q3 3 10 3T17.500 10V13Q15 16 10 16T2.500 13Z', '#333', '#fff') + p('M2.500 10Q10 13 17.500 10M7 4V11M13 4V11M5 5Q10 8 15 5', '#333', 'none', 1),
  dish: p('M2.500 7V9Q3 16 10 16T17.500 9V7', '#333', '#fff') + e(10, 7, 7.5, 3, '#fff', '#333') + p('M7 10V15M13 10V15M4 12Q10 15 16 12', '#333', 'none', 1),
  torusmesh: e(10, 10, 7.5, 7, '#fff', '#333') + e(10, 10, 3, 2.5, '#ffffcc', '#333') + p('M10 3V7M10 13V17M2 10H7M13 10H18M5 5L8 8M15 5L12 8M5 15L8 12M15 15L12 12', '#333', 'none', 1),
  patch: p('M3 12L8 3L17 9L8 17Z', '#111', 'url(#sky)', 1.3),
  mesh: p('M10 2L18 10L10 18L2 10Z', '#335', '#dde8f4') + p('M7 5L15 13M5 7L13 15M13 5L5 13M15 7L7 15', '#335', 'none', 1),
  revsurf: p('M2 12Q3 4 8 5L10 7L12 5Q17 4 18 12L13 14L11 11H9L7 14Z', '#223', '#d8e0e8', 1.3) + e(5, 12, 2.5, 2.5, '#fff', '#223') + e(15, 12, 2.5, 2.5, '#fff', '#223'),
  tabsurf: p('M4 3H14Q11 8 17 11L15 17H5Q8 12 3 9Z', '#234', 'url(#sky)', 1.2) + p('M8 3Q6 8 11 11L10 17', '#234', 'none', 1),
  rulesurf: p('M3 3Q11 3 18 15L9 17L3 14Z', '#234', 'url(#sky)', 1.1) + p('M3 14L9 4M5 15L14 8M3 14L3 3M9 17L17 12', '#234', 'none', 1),
  edgesurf: p('M3 15L6 5Q9 2 17 4L15 13Q11 11 9 17Z', '#234', 'url(#sky)', 1.3) + p('M6 5L12 8L15 13', '#234', 'none', 1),
  scene: f('M3 17L5 12H15L18 17Z', '#8ab0c8') + p('M5 4H12L15 7L13 11H6L5 8H12', '#222', 'none', 1.6) + e(10, 15, 4, 1.5, '#ddd', '#345', 1),
  fog: f('M2 2H18V18H2Z', '#4c9cc0') + f('M2 2V11L18 9V2Z', '#a8d4d8') + f('M2 3L18 12V18H2Z', '#1c5848') + f('M2 14Q10 10 18 15V18H2Z', '#dfeaf0'),
  background: f('M2 2H18V18H2Z', '#78aee0') + f('M3 6Q8 3 12 6T18 7V9H2Z', '#fff') + f('M2 10L8 8L18 11V14H2Z', '#2c7048') + f('M2 13H18V18H2Z', '#a4c060'),
  movie: f('M3 9H17V17H3Z', '#222') + p('M3 7L16 3', '#222', 'none', 3) + p('M5 6L7 5M9 5L11 4M13 3.500L15 3M5 11H16M5 13H16', '#fff', 'none', 1.2),
  teapot: teapot(),
  teapotbrush: c(9, 12, 6, 'url(#jade)', '#0a5038') + brush(7, 13),
  pick: p('M3 3H8V7H3ZM12 3H17V7H12Z', '#368', '#bde') + c(5, 15, 2, '#bde', '#368') + p('M8 5H12M6 8V14', '#ee0000') + f('M9 7V16L11 14L13 18L15 17L13 13H16Z', '#111') + f('M10 9V14L12 12H14Z', '#fff'),

  // Draw
  line: p('M4 16L16 4', '#111') + sq(4, 16, 16, 4),
  xline: p('M3 17L17 3', '#111') + f('M2 18V13L7 18ZM18 2V7L13 2Z', '#111') + sq(8, 12, 12, 8),
  mline: p('M3 17L9 11', '#111') + `<path d="M7 11L14 4M9 14L16 7" stroke="#446" stroke-dasharray="2 1.500"/>` + sq(3.500, 16.500, 16.500, 3.500),
  ray: p('M4 16L15 5', '#446') + f('M17 3V8L12 3Z', '#446') + sq(4, 16),
  pline: p('M3 13H9M9 13H13Q17 12 16 8T10 6', '#123', 'none', 1.4) + sq(3.500, 13, 10, 13, 9, 6),
  polygon: p('M10 4L16.500 8.500L14 16H6L3.500 8.500Z', '#111', 'url(#pale)', 1.4),
  rectangle: p('M4 5H16V14H4Z', '#111', 'url(#pale)', 1.3) + sq(4, 14, 16, 5),
  arc: p('M4 17Q4 6 16 4', '#357', 'none', 1.4) + sq(4, 16, 8, 8, 16, 4),
  circle: c(10, 10, 7, 'url(#pale)', '#246', 1.5) + p('M10 10L15 5', '#111') + sq(9.500, 10.500),
  circle3: c(10, 11, 6, 'url(#pale)', '#123') + p('M7 14L14 8', '#369') + f('M6 15V11L10 15Z', '#369') + ring(5, 6, 10, 4) + sq(16, 9),
  cloud0: f('M2 3H18V18H2Z', '#ccc') + c(4.500, 4.500, 2, '#fff') + c(14, 6, 4, '#fff', '#1122cc', 1.4) + c(4.500, 15.500, 2.200, '#8ee') + c(15, 15, 2.200, '#8ee') + p('M8 9L12 13M12 9L8 13M8 3V6M6.500 4.500H9.500M13 11H16', '#ee0000', 'none', 1.2),
  revcloud: p('M6 4Q9 1 12 4Q16 4 15 8Q19 12 15 14Q14 18 10 16Q8 16 8 13Q6 14 5 11Q1 9 4 7Q3 5 6 4Z', '#334', 'url(#pale)', 1.4),
  spline: p('M3 16Q6 4 9 9T17 4', '#333', 'none', 1.4),
  multiline0: `<path d="M2 14L15 2" stroke="#123" stroke-width="1.200" stroke-dasharray="3 1"/>` + sq(4, 12, 8, 8, 12, 5) + t(11, 18, 'n', 13, '#246', 700),
  breakline: `<path d="M2 16L16 3M10 10L15 15" stroke="#123" stroke-width="1.300" stroke-dasharray="4 1.500"/>` + sq(5, 13, 9, 9.500, 13, 6),
  ellipse: e(10, 10, 7, 4.5, 'url(#pale)', '#123') + sq(10, 5.500, 3, 10, 17, 10),
  ellipsearc: p('M4 12Q3 6 10 6T17 10Q16 14 11 14', '#123', 'url(#pale)') + sq(4.500, 13, 11, 14),
  insertblock: p('M6.500 2.500H14L17.500 6V14.500H6.500Z', '#346', '#fff', 1) + `<g transform="translate(-1 4) scale(.8)">${blocks}</g>` + f('M19 15V19H15Z', '#000'),
  makeblock: blocks + sq(5, 12),
  point: sq(10, 11),
  region: p('M5 2V17M3 4H18M15 2V18M2 15H18', '#222', 'none', 1.3) + f('M6 5H14L9 14H6Z', '#bcd') + p('M6 14L14 5', '#456'),
  hatch: p('M5 2V18M2 5H18M15 2V18M2 15H18', '#135', 'none', 1.4) + p('M5 6L14 15M5 10L10 15M9 5L15 11M12 5L15 8', '#135', 'none', 1),
  boundary: p('M3 5H13L17 9V15H3Z', '#246', 'url(#sky)', 1.2) + c(9, 10, 3, '#fff', '#369'),

  // Modify
  erase: p('M3 17H17', '#111', 'none', 1) + p('M8 11L16 2', '#d8a020', 'none', 3) + p('M10 12L18 4', '#402800', 'none', 1) + f('M3 14L8 9L11 12L7 16H4Z', '#f0d8d0') + p('M3 14L8 9L11 12L7 16H4Z', '#733', 'none', 1),
  copyobj: c(6, 5, 3, '#fff', '#223') + c(9, 13, 3, '#fff', '#223') + c(15, 14, 3, '#fff', '#223') + p('M11 3Q16 4 16 8', '#036', 'none', 1.6) + f('M13 7H19L16 10Z', '#036'),
  mirror: p('M8 4V16H3Z', '#111', '#fff', 1.1) + p('M12 4V16H17Z', '#111', '#bcd', 1.1) + p('M10 1V19', '#258', 'none', 1.3),
  offset: p('M3 16V12H6V7Q7 3 10.500 3T15 7V12H18V16Z', '#123', 'none', 1.2) + p('M6 14H8V8Q9 6 10.500 6T12 8V14H15', '#258', 'none', 1.1),
  array: p('M2.500 2.500H8.500V8.500H2.500ZM11.500 2.500H17.500V8.500H11.500ZM2.500 11.500H8.500V17.500H2.500ZM11.500 11.500H17.500V17.500H11.500Z', '#111', 'url(#pale)', 1),
  move: p('M10 3V17M3 10H17', '#2c6490', 'none', 2) + f('M7 5H13L10 1ZM7 15H13L10 19ZM5 7V13L1 10ZM15 7V13L19 10Z', '#2c6490'),
  rotate: p('M14 4Q18 8 16 13Q13 17 8 16Q3 14 3.500 9Q5 5 9 4', '#39668f', 'none', 2.2) + f('M4 1H11V8Z', '#39668f'),
  scale: p('M2.500 2.500H17.500V17.500H2.500Z', '#58a', 'url(#sky)', 1.2) + `<path d="M2.500 9.500H10.500V17.500" stroke="#000" fill="#fff" stroke-dasharray="1.500 1"/>`,
  stretch: p('M8 3H10L18 17H8Z', '#123', 'url(#sky)', 1.2) + `<path d="M3 3H8V17H3Z" fill="none" stroke="#000" stroke-dasharray="1.500 1"/>`,
  trim: p('M2 11H8M8 16L13 4', '#246', 'none', 1.3) + `<path d="M12 10H18" stroke="#246" stroke-width="1.300" stroke-dasharray="2 1"/>`,
  extend: p('M2 11H7M13 16L18 5', '#246', 'none', 1.3) + `<path d="M7 11H14" stroke="#246" stroke-width="1.300" stroke-dasharray="2 1"/>`,
  break1: p('M9 5H3V16H17V5H11', '#111', 'url(#pale)', 1.1) + sq(10, 5),
  break2: p('M7 5H3V16H17V5H13', '#111', 'url(#pale)', 1.1) + sq(6, 5, 13, 5),
  chamfer: p('M3 18V10L10 4H17', '#258', 'none', 1.5) + `<path d="M3 10V3H10" stroke="#000" fill="none" stroke-dasharray="1 1"/>`,
  fillet: p('M3 18V13Q4 4 12 4H17', '#258', 'none', 1.6) + `<path d="M3 12V3H11" stroke="#000" fill="none" stroke-dasharray="1 1"/>`,
  explode: c(6, 14, 3.5, '#e02010', '#820') + p('M3 10L5 12M10 9L8 11M2 15H4M7 18L8 16M10 15L11 17', '#e8c020', 'none', 2) + p('M9 9L15 4M15 2V7M12 4H18M11 8L17 8', '#999', 'none', 1.3),
  distance: ruler(12) + `<path d="M4 6H16" stroke="#258" stroke-width="1.500" stroke-dasharray="2 1.500"/>` + sq(3.500, 6, 16.500, 6),
  area: ruler(13) + f('M3 3L17 8V12H3Z', '#336a98') + p('M3 3L17 8V12H3Z', '#135', 'none', 1),
  massprop: ruler(13) + f('M3 7L7 3L17 5V11H3Z', '#5c8cc0') + p('M3 7L7 3L17 5L13 8ZM13 8V12', '#cde', 'none', 1),
  list: f('M4 3L14 2V6L10 7L16 16L6 18L4 14L7 13Z', '#c8e0ec') + p('M4 3L14 2V6L10 7L16 16L6 18L4 14L7 13Z', '#578', 'none', 1) + p('M7 5L12 4M8 9L11 9M9 12L13 11', '#357', 'none', 1),
  locate: p('M4 3V16H17', '#246', 'none', 2) + f('M2 5H6L4 2ZM15 14V18L18 16Z', '#246') + lens(11, 6, 3.5) + p('M4 16L9 11', '#246'),
  teapotlist: `<g transform="translate(-1 -2)">${teapot()}</g>` + p('M8.500 9.500H18.500V17.500H8.500Z', '#258', '#f4faff', 1) + p('M11 12H16M11 15H16', '#258', 'none', 1),
  listbrush: p('M3.500 2.500H15.500V17.500H3.500Z', '#578', '#e4eef8', 1) + p('M5 5H14M5 8H14M5 11H10M5 14H10', '#258', 'none', 1) + c(13, 14, 4, 'url(#jade)', '#264') + brush(9, 14),

  // Solids
  box: p('M3 7L7 3H17V12L13 17H3Z', '#456f92', '#8cb8d8', 1) + f('M3 7L7 3H17L13 7Z', '#e0f0fa') + f('M13 7L17 3V12L13 17Z', '#5a84a8') + f('M4 8H12V16H4Z', 'url(#sky)'),
  sphere: c(10, 10, 7.5, 'url(#ball)', '#6a8cb8', 0.6),
  cylinder: f('M3 5V15Q10 19 17 15V5Z', 'url(#steel)') + e(10, 5, 7, 2.5, '#c4d8ea', '#567f9f', 0.8) + p('M3 5V15Q10 19 17 15V5', '#567f9f', 'none', 0.8),
  cone: p('M10 2L4 15Q10 19 16 15Z', '#8aa4c0', 'url(#steel)', 0.8),
  wedge: p('M3 7L6 3L17 13L14 17H3Z', '#557fa5', '#b0d0ec', 1) + f('M3 7L6 3L17 13L14 17Z', '#6c98c8'),
  torus: e(10, 10, 7.5, 6.5, 'url(#ball)', '#567', 0.7) + e(10, 9, 2.500, 1.800, '#f4f4e8', '#456', 1),
  revolve: f('M3 8L10 5L17 8L16 15L10 18L4 15Z', '#5c9cd0') + f('M10 10L17 8L16 15L10 18Z', '#3878b0') + p('M3 7Q7 1 15 4', '#4a8cc0', 'none', 2.500) + f('M13 1L19 5L12 8Z', '#4a8cc0') + p('M3 8L10 10L17 8', '#cef', 'none', 1),
  slice: f('M2 14L8 11L17 14L11 18Z', '#88aac8') + p('M4 3L10 11', '#844', 'none', 2) + p('M8 10L15 14L6 13Z', '#345', '#567', 1.2),
  section: f('M8 2H12V18H8Z', '#2870b0') + f('M2 10L9 7L18 9L11 14Z', '#4c9cd8') + f('M8 2H10V8H8Z', '#8cc4ec') + p('M2 10L9 7L18 9L11 14Z', '#1c5890', 'none', 0.8),
  interfere: f('M2 6L9 3L18 6V13L11 17L2 13Z', '#3a88c8') + f('M2 6L9 3L18 6L11 9Z', '#a4d4f4') + p('M6 5V15M11 8V17M14 5V15', '#165088', 'none', 1.2),
  setupdraw: board + `<g transform="translate(2 3) scale(.7)">${iso('#9cf', '#48c', '#269', '#258')}</g>` + pencil(9, 11),
  setupview: board + p('M3 4H7V8H3ZM3 12H7V16H3Z', '#357', '#fff', 1) + `<g transform="translate(6 4) scale(.65)">${iso('#9cf', '#48c', '#269', '#258')}</g>`,
  setupprofile: board + `<g transform="translate(3 3) scale(.7)">${iso('#9cf', '#48c', '#269', '#258')}</g>`,
  draworder: p('M3.500 3.500H13.500V12.500H3.500Z', '#276058', '#5a9080', 1) + p('M7.500 8.500H17.500V17.500H7.500Z', '#276088', '#88b0a8', 1) + f('M8 9H13V12H8Z', '#3c7068'),
  hatchedit: p('M3 4H16V17H3Z', '#246', '#fff', 1.5) + p('M3 8L12 17M3 12L8 17M7 4L16 13M16 4L3 17M12 4L3 13', '#357', 'none', 1) + pencil(8, 13),
  pledit: p('M4 16H14Q18 15 14 12', '#333', 'none', 1.6) + pencil(4, 14),
  spedit: p('M3 16Q4 7 9 10T17 4', '#222', 'none', 1.6) + pencil(6, 15),
  attedit: tag + pencil(9, 12),
  blockedit: p('M3 8H10V16H3Z', '#357', '#9cd') + c(14, 14, 4, '#8bd', '#357') + pencil(6, 13),
  tagedit: tag + p('M8 11L13 9M8 11L10 14', '#258', 'none', 1.2),
  mledit: f('M3 3L8 3L18 13L14 17L7 11Z', '#b88880') + f('M10 13L14 9L18 13L14 17Z', '#cde') + `<path d="M2 12L8 18" stroke="#234" stroke-dasharray="2 1"/>`,
};

const draw = name => `<svg viewBox="0 0 20 20" fill="none" aria-hidden="true">${icons[name] || ''}</svg>`;

document.querySelectorAll('[data-tools]').forEach(bar => {
  bar.innerHTML = bar.dataset.tools.split(' ').map(item => {
    if (item === '-') return '<i class="sep"></i>';
    const [name, state] = item.split('=');
    return `<button type="button" aria-label="${name}"${state ? ` class="${state}"` : ''}>${draw(name)}</button>`;
  }).join('');
});
document.querySelectorAll('[data-icon]').forEach(b => { b.innerHTML = draw(b.dataset.icon); });
```
